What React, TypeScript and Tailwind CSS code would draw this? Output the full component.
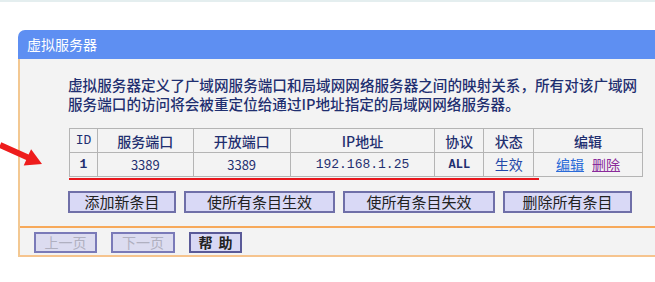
import React from "react";

const cjk = "font-['Noto_Sans_CJK_SC','Noto_Sans',sans-serif]";
const mono = "font-['Liberation_Mono','Noto_Sans_CJK_SC',monospace]";

const cols = [
  { label: "ID", w: "w-[28px]", mono: true },
  { label: "服务端口", w: "w-[96px]" },
  { label: "开放端口", w: "w-[97px]" },
  { label: "IP地址", w: "w-[145px]" },
  { label: "协议", w: "w-[49px]" },
  { label: "状态", w: "w-[50px]" },
  { label: "编辑", w: "w-[109px]" },
];

const actions = [
  { label: "添加新条目", w: "w-[108px]" },
  { label: "使所有条目生效", w: "w-[151px]" },
  { label: "使所有条目失效", w: "w-[152px]" },
  { label: "删除所有条目", w: "w-[129px]" },
];

const Arrow: React.FC = () => (
  <svg className="absolute left-0 top-[138px]" width="44" height="28" viewBox="0 0 44 28">
    <polygon
      points="1.3,2.3 28.6,14.6 31.1,9.2 42,24 23.7,25.6 26.2,20.1 -1.1,7.7"
      fill="#ee1c1c"
    />
  </svg>
);

const App: React.FC = () => {
  return (
    <div className={`relative w-[655px] h-[282px] bg-white overflow-hidden border-t-2 border-[#e4eeef] ${cjk}`}>
      <Arrow />
      <div className="ml-[18px] mt-[28px]">
        <div className="h-[29px] bg-[#5e8ff2] rounded-tl-[7px] pl-[9px] text-white text-[14px] leading-[29px]">
          虚拟服务器
        </div>
        <div className="border-l-2 border-[#f3c892] bg-[#f3f3f3]">
          <div className="pl-[48px] pt-[16px] pb-[13px]">
            <p className="text-[14.6px] leading-[19px] text-[#1f2f70] font-medium">
              虚拟服务器定义了广域网服务端口和局域网网络服务器之间的映射关系，所有对该广域网
              <br />
              服务端口的访问将会被重定位给通过IP地址指定的局域网网络服务器。
            </p>
            <div className="mt-[15px] ml-px w-[574px]">
              <table className="border-collapse border border-[#a8a8a8] text-[#1f2f70] text-[14px]">
                <thead>
                  <tr className="h-[24px]">
                    {cols.map((c) => (
                      <th
                        key={c.label}
                        className={`${c.w} p-0 border border-[#b4b4b4] font-medium text-center leading-[22px] ${c.mono ? mono + " text-[13px] font-bold" : ""}`}
                      >
                        {c.label}
                      </th>
                    ))}
                  </tr>
                </thead>
                <tbody>
                  <tr className="h-[24px] text-center">
                    <td className={`p-0 border border-[#b4b4b4] ${mono} text-[13px] font-bold`}>1</td>
                    <td className="p-0 border border-[#b4b4b4] text-[13px]">3389</td>
                    <td className="p-0 border border-[#b4b4b4] text-[13px]">3389</td>
                    <td className={`p-0 border border-[#b4b4b4] ${mono} text-[13px]`}>192.168.1.25</td>
                    <td className={`p-0 border border-[#b4b4b4] ${mono} text-[12px] font-bold`}>ALL</td>
                    <td className="p-0 border border-[#b4b4b4] text-[#2348a8]">生效</td>
                    <td className="p-0 border border-[#b4b4b4]">
                      <span className="text-[#2a6ad8] underline">编辑</span>
                      <span className="ml-[8px] text-[#8a2a9a] underline">删除</span>
                    </td>
                  </tr>
                </tbody>
              </table>
              <div className="mt-[1px] h-[2px] w-[470px] bg-[#e8161c]" />
            </div>
            <div className="mt-[11px] flex gap-[8px]">
              {actions.map((a) => (
                <button
                  key={a.label}
                  className={`${a.w} h-[22px] border-2 border-[#6f6fa8] bg-[#d9d9f6] text-[15px] leading-[18px] text-[#222]`}
                >
                  {a.label}
                </button>
              ))}
            </div>
          </div>
          <div className="border-t-2 border-[#f7a95a] h-[31px] pl-[14px] pt-[4px] flex gap-[14px] border-b-2 border-b-[#f6c48e]">
            <button className="w-[63px] h-[21px] border-2 border-[#7a7ab8] bg-[#dcdcf0] text-[14px] leading-[17px] text-[#b0b0c0]">
              上一页
            </button>
            <button className="w-[64px] h-[21px] border-2 border-[#7a7ab8] bg-[#dcdcf0] text-[14px] leading-[17px] text-[#b0b0c0]">
              下一页
            </button>
            <button className="w-[53px] h-[21px] border-2 border-[#5a5a98] bg-[#d8d8f4] text-[14px] leading-[17px] font-bold text-[#222] flex justify-center gap-[6px]">
              <span>帮</span>
              <span>助</span>
            </button>
          </div>
        </div>
      </div>
    </div>
  );
};

export default App;
